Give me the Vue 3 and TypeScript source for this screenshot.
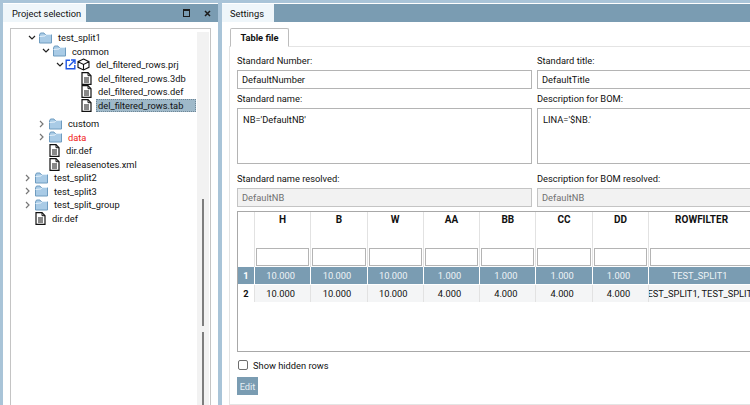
<script setup lang="ts">
type TreeRow = {
  label: string
  depth: number
  chevron?: 'open' | 'closed'
  icon: 'folder' | 'doc' | 'prj'
  red?: boolean
  selected?: boolean
  gapAfter?: boolean
}

const treeRows: TreeRow[] = [
  { label: 'test_split1', depth: 1, chevron: 'open', icon: 'folder' },
  { label: 'common', depth: 2, chevron: 'open', icon: 'folder' },
  { label: 'del_filtered_rows.prj', depth: 3, chevron: 'open', icon: 'prj' },
  { label: 'del_filtered_rows.3db', depth: 4, icon: 'doc' },
  { label: 'del_filtered_rows.def', depth: 4, icon: 'doc' },
  { label: 'del_filtered_rows.tab', depth: 4, icon: 'doc', selected: true, gapAfter: true },
  { label: 'custom', depth: 2, chevron: 'closed', icon: 'folder' },
  { label: 'data', depth: 2, chevron: 'closed', icon: 'folder', red: true },
  { label: 'dir.def', depth: 2, icon: 'doc' },
  { label: 'releasenotes.xml', depth: 2, icon: 'doc' },
  { label: 'test_split2', depth: 1, chevron: 'closed', icon: 'folder' },
  { label: 'test_split3', depth: 1, chevron: 'closed', icon: 'folder' },
  { label: 'test_split_group', depth: 1, chevron: 'closed', icon: 'folder' },
  { label: 'dir.def', depth: 1, icon: 'doc' }
]

const columns = ['H', 'B', 'W', 'AA', 'BB', 'CC', 'DD', 'ROWFILTER']

const rows = [
  ['10.000', '10.000', '10.000', '1.000', '1.000', '1.000', '1.000', 'TEST_SPLIT1'],
  ['10.000', '10.000', '10.000', '4.000', '4.000', '4.000', '4.000', 'TEST_SPLIT1, TEST_SPLIT2']
]

// closed and leaf rows sit a little further left than open ones
const rowIndent = (row: TreeRow) => {
  const base = (row.depth - 1) * 14 + 14
  return row.chevron === 'open' || row.depth === 4 ? base : base - 4
}
</script>

<template>
  <div class="app">
    <section class="pane left">
      <header class="bar">
        <div class="tab">Project selection</div>
        <div class="bar-actions">
          <span class="maximize"></span>
          <svg width="7" height="7" viewBox="0 0 7 7">
            <path d="M1 1l5 5M6 1L1 6" stroke="#1b1b1b" stroke-width="1.5" fill="none" />
          </svg>
        </div>
      </header>
      <div class="tree-wrap">
        <div class="tree">
          <div class="tree-list">
            <div
              v-for="row in treeRows"
              :key="row.label + row.depth"
              class="tree-row"
              :class="{ gap: row.gapAfter }"
              :style="{ paddingLeft: rowIndent(row) + 'px' }"
            >
              <span class="chevron">
                <svg v-if="row.chevron === 'open'" width="8" height="6" viewBox="0 0 8 6">
                  <path d="M1 1l3 3 3-3" stroke="#222" stroke-width="1.2" fill="none" />
                </svg>
                <svg v-else-if="row.chevron === 'closed'" width="6" height="8" viewBox="0 0 6 8">
                  <path d="M1 1l3 3-3 3" stroke="#777" stroke-width="1.2" fill="none" />
                </svg>
              </span>
              <svg v-if="row.icon === 'folder'" class="icon" width="13" height="12" viewBox="0 0 13 12">
                <path d="M.5 3V11h12V2.5H6L5 1H1.5z" fill="#a9cbe6" stroke="#6f9cc0" />
                <path d="M.5 4.5L6 4l1-1.5h5.5" stroke="#e3f0fa" fill="none" />
              </svg>
              <template v-else-if="row.icon === 'prj'">
                <svg class="link" width="11" height="11" viewBox="0 0 11 11">
                  <path d="M5 1.2H1.2v8.6h8.6V6" stroke="#1e56e6" stroke-width="1.4" fill="none" />
                  <path d="M4 7l5.5-5.5M6 1h4v4" stroke="#1e56e6" stroke-width="1.4" fill="none" />
                </svg>
                <svg class="icon" width="13" height="13" viewBox="0 0 13 13">
                  <path d="M6.5 1L12 3.7v5.6L6.5 12 1 9.3V3.7zM1 3.7l5.5 2.8L12 3.7M6.5 6.5V12" stroke="#111" stroke-width="1.1" fill="#fff" />
                </svg>
              </template>
              <svg v-else class="icon doc" width="11" height="13" viewBox="0 0 11 13">
                <path d="M1 .7h6l3 3v8.6H1z" fill="#fff" stroke="#111" stroke-width="1.2" />
                <path d="M7 .7v3h3M3 6h5M3 8h5M3 10h5" stroke="#111" fill="none" />
              </svg>
              <span class="tree-label" :class="{ red: row.red, selected: row.selected }">{{ row.label }}</span>
            </div>
          </div>
          <div class="tree-scroll">
            <span class="thumb top"></span>
            <span class="thumb"></span>
          </div>
        </div>
      </div>
    </section>

    <section class="pane right">
      <header class="bar">
        <div class="tab">Settings</div>
      </header>
      <div class="settings">
        <div class="subtab">Table file</div>
        <div class="sheet">
          <div class="form">
            <label>Standard Number:<span class="field">DefaultNumber</span></label>
            <label>Standard title:<span class="field">DefaultTitle</span></label>
            <label>Standard name:<span class="field area">NB='DefaultNB'</span></label>
            <label>Description for BOM:<span class="field area">LINA='$NB.'</span></label>
            <label>Standard name resolved:<span class="field disabled">DefaultNB</span></label>
            <label>Description for BOM resolved:<span class="field disabled">DefaultNB</span></label>
          </div>

          <div class="table">
            <div class="grid head">
              <div class="corner"></div>
              <div v-for="col in columns" :key="col" class="col-head">
                <b>{{ col }}</b>
                <span class="filter"></span>
              </div>
            </div>
            <div
              v-for="(row, i) in rows"
              :key="i"
              class="grid data"
              :class="{ active: i === 0 }"
            >
              <div class="num">{{ i + 1 }}</div>
              <div v-for="(cell, j) in row" :key="j" class="cell">{{ cell }}</div>
            </div>
          </div>

          <div class="check"><span class="box"></span>Show hidden rows</div>
          <div class="edit">Edit</div>
        </div>
      </div>
    </section>
  </div>
</template>

<style scoped>
.app {
  width: 750px;
  height: 405px;
  overflow: hidden;
  display: flex;
  gap: 4px;
  padding-top: 3px;
  box-sizing: border-box;
  background: #a9c4d8;
  font-family: Roboto, "Liberation Sans", sans-serif;
  font-size: 9.3px;
  color: #111;
}

.pane {
  background: #fff;
  display: flex;
  flex-direction: column;
  border-top: 1px solid #fff;
}

.left {
  width: 215px;
  margin-left: 3px;
}

.right {
  flex: 1;
  min-width: 0;
}

.bar {
  height: 18px;
  flex: none;
  display: flex;
  align-items: stretch;
  background: #7a9cb2;
}

.tab {
  padding: 0 9px;
  display: flex;
  align-items: center;
  white-space: nowrap;
  background: #eff6fa;
}

.left .tab {
  width: 83px;
  box-sizing: border-box;
}

.right .tab {
  width: 52px;
  box-sizing: border-box;
  padding-left: 8px;
}

.bar-actions {
  flex: 1;
  display: flex;
  align-items: center;
  justify-content: flex-end;
  gap: 14px;
  padding-right: 7px;
}

.maximize {
  width: 5px;
  height: 5px;
  border: 1px solid #1b1b1b;
  border-top-width: 2px;
}

.tree-wrap {
  flex: 1;
  min-height: 0;
  padding: 6px 7px 0;
}

.tree {
  height: 100%;
  box-sizing: content-box;
  border: 1px solid #c4c4c4;
  border-bottom: 0;
  display: flex;
  justify-content: space-between;
}

.tree-list {
  width: 185px;
  padding-top: 2px;
}

.tree-row {
  height: 13.5px;
  display: flex;
  align-items: center;
  white-space: nowrap;
}

.tree-row.gap {
  margin-bottom: 5px;
}

.chevron {
  width: 14px;
  flex: none;
  display: flex;
  align-items: center;
  justify-content: center;
}

.icon {
  flex: none;
  margin-right: 4px;
}

.link {
  flex: none;
  margin: 0 1px 0 -2px;
}

.tree-label {
  padding: 0 2px;
  line-height: 13px;
}

.tree-label.selected {
  flex: 1;
  background: #9fb9c9;
  outline: 1px dotted #6f8797;
  outline-offset: -1px;
}

.red {
  color: #f01818;
}

.tree-scroll {
  width: 12px;
  margin: 3px 1px 0 0;
  background: #f2f2f2;
  display: flex;
  flex-direction: column;
  align-items: center;
  justify-content: flex-end;
  gap: 6px;
}

.thumb {
  width: 2px;
  height: 74px;
  background: #7d7d7d;
}

.thumb.top {
  height: 127px;
}

.settings {
  flex: 1;
  min-height: 0;
  padding: 6px 0 0 7px;
  display: flex;
  flex-direction: column;
}

.subtab {
  width: 59px;
  height: 19px;
  box-sizing: border-box;
  margin-left: 1px;
  margin-bottom: -1px;
  border: 1px solid #bdbdbd;
  border-bottom: 1px solid #fff;
  border-radius: 2px 2px 0 0;
  position: relative;
  z-index: 1;
  background: #fff;
  display: flex;
  align-items: center;
  justify-content: center;
  font-weight: 700;
}

.sheet {
  flex: 1;
  min-height: 0;
  border: 1px solid #e4e4e4;
  border-right: 0;
  padding: 8px 0 0 7px;
  display: flex;
  flex-direction: column;
}

.form {
  display: grid;
  grid-template-columns: 295px 220px;
  column-gap: 5px;
  row-gap: 4px;
}

.form label {
  display: flex;
  flex-direction: column;
  gap: 3px;
  line-height: 12px;
}

.field {
  height: 19px;
  box-sizing: border-box;
  border: 1px solid #b4b4b4;
  padding: 0 4px;
  display: flex;
  align-items: center;
}

.field.area {
  height: 56px;
  align-items: flex-start;
  padding: 5px 5px;
  margin-bottom: 5px;
}

.field.disabled {
  background: #f2f2f2;
  color: #707070;
  border-color: #c4c4c4;
}

.table {
  width: 520px;
  height: 141px;
  flex: none;
  margin-top: 4px;
  box-sizing: border-box;
  border: 1px solid #a8a8a8;
}

.grid {
  display: grid;
  grid-template-columns: 16px repeat(7, 56.3px) 106px;
}

.col-head {
  height: 55px;
  box-sizing: border-box;
  border-left: 1px solid #e2e2e2;
  display: flex;
  flex-direction: column;
  align-items: center;
  justify-content: space-between;
  padding: 2px 1px 1px;
  font-size: 10px;
}

.filter {
  width: 100%;
  height: 18px;
  box-sizing: border-box;
  border: 1px solid #b4b4b4;
  background: #fff;
}

.data {
  height: 17px;
  margin-bottom: 1px;
  background: #f4f5f6;
}

.num {
  background: #fff;
  font-weight: 700;
  display: flex;
  align-items: center;
  justify-content: center;
}

.cell {
  border-left: 1px solid #e2e2e2;
  padding-right: 4px;
  display: flex;
  align-items: center;
  justify-content: center;
  white-space: nowrap;
  overflow: hidden;
}

.active {
  background: #7a9cb2;
  color: #eef3f6;
}

.active .num {
  background: #7a9cb2;
  color: #fff;
}

.active .cell {
  border-left-color: #fff;
}

.check {
  margin-top: 7px;
  display: flex;
  align-items: center;
  gap: 5px;
  height: 12px;
}

.box {
  width: 10px;
  height: 10px;
  box-sizing: border-box;
  margin-left: 1px;
  border: 1px solid #6e6e6e;
  border-radius: 2px;
}

.edit {
  width: 21px;
  height: 18px;
  margin-top: 6px;
  background: #7a9cb2;
  color: #e6eef3;
  display: flex;
  align-items: center;
  justify-content: center;
}
</style>
